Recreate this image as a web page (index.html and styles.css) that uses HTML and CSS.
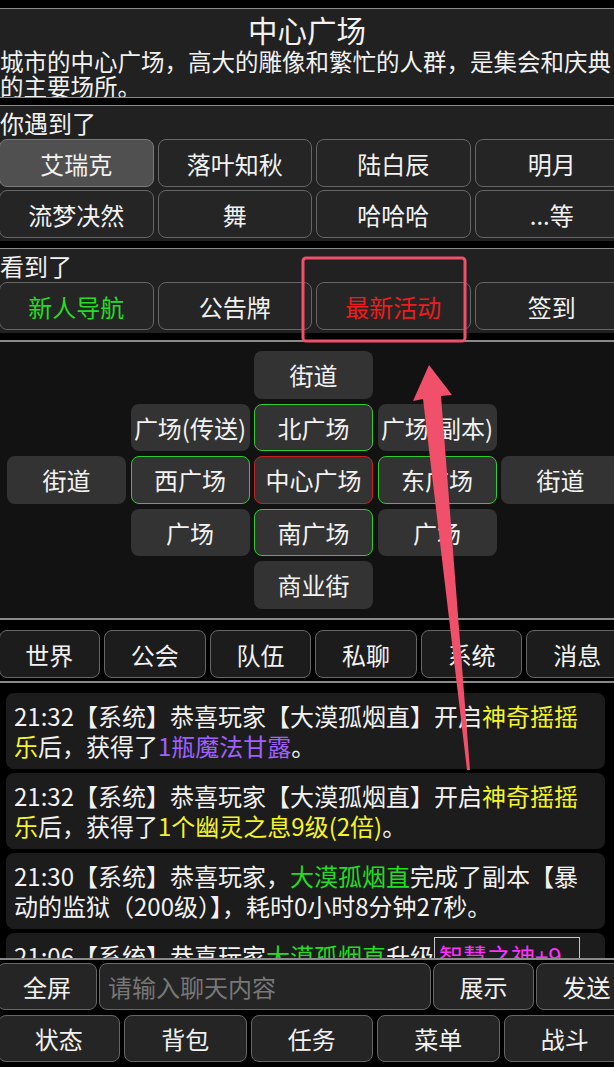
FILE: index.html
```html
<!DOCTYPE html>
<html lang="zh-CN">
<head>
    <meta charset="UTF-8">
    <title>中心广场</title>
    <link rel="stylesheet" href="styles.css">
</head>
<body>
<div class="panel info">
    <div class="title">中心广场</div>
    <div class="desc">城市的中心广场，高大的雕像和繁忙的人群，是集会和庆典的主要场所。</div>
</div>

<div class="panel group">
    <div class="label">你遇到了</div>
    <div class="btn-grid">
        <div class="btn on">艾瑞克</div>
        <div class="btn">落叶知秋</div>
        <div class="btn">陆白辰</div>
        <div class="btn">明月</div>
        <div class="btn">流梦决然</div>
        <div class="btn">舞</div>
        <div class="btn">哈哈哈</div>
        <div class="btn">...等</div>
    </div>
</div>

<div class="panel group">
    <div class="label">看到了</div>
    <div class="btn-grid">
        <div class="btn green">新人导航</div>
        <div class="btn">公告牌</div>
        <div class="btn red">最新活动</div>
        <div class="btn">签到</div>
    </div>
</div>

<div class="map">
    <div class="map-grid">
        <div class="gap"></div><div class="gap"></div>
        <div class="cell">街道</div>
        <div class="gap"></div><div class="gap"></div>

        <div class="gap"></div>
        <div class="cell">广场(传送)</div>
        <div class="cell near">北广场</div>
        <div class="cell">广场(副本)</div>
        <div class="gap"></div>

        <div class="cell">街道</div>
        <div class="cell near">西广场</div>
        <div class="cell here">中心广场</div>
        <div class="cell near">东广场</div>
        <div class="cell">街道</div>

        <div class="gap"></div>
        <div class="cell">广场</div>
        <div class="cell near">南广场</div>
        <div class="cell">广场</div>
        <div class="gap"></div>

        <div class="gap"></div><div class="gap"></div>
        <div class="cell">商业街</div>
        <div class="gap"></div><div class="gap"></div>
    </div>
</div>

<div class="tabs">
    <div class="tab">世界</div>
    <div class="tab">公会</div>
    <div class="tab">队伍</div>
    <div class="tab">私聊</div>
    <div class="tab">系统</div>
    <div class="tab">消息</div>
</div>

<div class="chat">
    <div class="msg">21:32【系统】恭喜玩家【大漠孤烟直】开启<span class="y">神奇摇摇乐</span>后，获得了<span class="p">1瓶魔法甘露</span>。</div>
    <div class="msg">21:32【系统】恭喜玩家【大漠孤烟直】开启<span class="y">神奇摇摇乐</span>后，获得了<span class="y">1个幽灵之息9级(2倍)</span>。</div>
    <div class="msg">21:30【系统】恭喜玩家，<span class="g">大漠孤烟直</span>完成了副本【暴动的监狱（200级）】，耗时0小时8分钟27秒。</div>
    <div class="msg">21:06【系统】恭喜玩家<span class="g">大漠孤烟直</span>升级<span class="item">智慧之神+9</span>成功，实力大增！</div>
</div>

<div class="bottom">
    <div class="input-row">
        <div class="btn full">全屏</div>
        <div class="say">请输入聊天内容</div>
        <div class="btn show">展示</div>
        <div class="btn show">发送</div>
    </div>
    <div class="nav-row">
        <div class="btn">状态</div>
        <div class="btn">背包</div>
        <div class="btn">任务</div>
        <div class="btn">菜单</div>
        <div class="btn">战斗</div>
    </div>
</div>

<svg class="mark" width="614" height="1067" viewBox="0 0 614 1067">
    <rect x="303" y="258" width="162" height="83" rx="3" fill="none" stroke="#f0506a" stroke-width="3"/>
    <polygon points="429,365 452,395 441,396 470,770 467,770 423,399 413,401" fill="#f0506a"/>
</svg>
</body>
</html>
```

FILE: styles.css
```css
html * {
    box-sizing: border-box;
}

body {
    margin: 0;
    height: 1067px;
    background: #000;
    color: #f2f2f2;
    font-family: "Noto Sans CJK SC", "Microsoft YaHei", sans-serif;
    font-size: 24px;
    display: flex;
    flex-direction: column;
    overflow: hidden;
    position: relative;
}

.panel {
    flex: none;
    background: #212121;
    border-top: 1px solid #8a8a8a;
    overflow: hidden;
}

.info {
    margin-top: 8px;
    height: 90px;
    border-bottom: 1px solid #8a8a8a;
}

.title {
    padding-top: 2px;
    font-size: 29.5px;
    line-height: 36px;
    text-align: center;
}

.desc {
    width: 630px;
    margin-top: 2px;
    font-size: 23.5px;
    line-height: 24.5px;
}

.group {
    margin-top: 7px;
    padding-bottom: 3px;
}

.label {
    line-height: 33px;
}

.btn-grid {
    display: grid;
    grid-template-columns: repeat(4, 154.5px);
    grid-auto-rows: 48px;
    gap: 3px 4px;
    margin-left: -1px;
}

.btn {
    display: flex;
    align-items: center;
    justify-content: center;
    background: #252525;
    border: 1px solid #666;
    border-radius: 8px;
    white-space: nowrap;
}

.btn.on {
    background: #505050;
    border-color: #7a7a7a;
}

.green {
    color: #22dd22;
}

.red {
    color: #ee1c1c;
}

.map {
    flex: none;
    margin-top: 7px;
    padding: 9px 0 9.5px 7px;
    background: #121212;
    border-top: 2px solid #8a8a8a;
    border-bottom: 2px solid #8a8a8a;
    overflow: hidden;
}

.map-grid {
    display: grid;
    grid-template-columns: repeat(5, 119px);
    grid-auto-rows: 47.5px;
    gap: 5px 4.5px;
}

.cell {
    display: flex;
    align-items: center;
    justify-content: center;
    background: #333;
    border: 1px solid transparent;
    border-radius: 8px;
    white-space: nowrap;
}

.cell.near {
    border-color: #2ecc2e;
}

.cell.here {
    border-color: #c42222;
}

.tabs {
    flex: none;
    display: flex;
    gap: 4.1px;
    padding: 10px 0 3px;
    margin-left: -1.5px;
    border-bottom: 2px solid #8a8a8a;
}

.tab {
    flex: none;
    width: 101.5px;
    height: 48px;
    display: flex;
    align-items: center;
    justify-content: center;
    background: #1c1c1c;
    border: 1px solid #666;
    border-radius: 8px;
}

.chat {
    flex: 1;
    min-height: 0;
    overflow: hidden;
    padding: 10px 9px 0 6px;
    display: flex;
    flex-direction: column;
    gap: 4px;
}

.msg {
    flex: none;
    background: #1c1c1c;
    border-radius: 8px;
    padding: 8px;
    line-height: 30px;
}

.y {
    color: #f5f523;
}

.p {
    color: #a060ff;
}

.g {
    color: #22dd22;
}

.item {
    color: #ff30ff;
    border: 1px solid #c8c8c8;
    padding: 0 17px 0 4px;
}

.bottom {
    flex: none;
    border-top: 2px solid #8a8a8a;
    padding: 3px 0 5px;
    display: flex;
    flex-direction: column;
    gap: 5px;
    overflow: hidden;
}

.input-row {
    display: flex;
    gap: 2px;
    height: 47px;
    margin-left: -3px;
}

.full {
    flex: none;
    width: 100px;
}

.say {
    flex: none;
    width: 332px;
    display: flex;
    align-items: center;
    padding-left: 8px;
    color: #777;
    background: #252525;
    border: 1px solid #666;
    border-radius: 8px;
}

.show {
    flex: none;
    width: 101px;
}

.nav-row {
    display: grid;
    grid-template-columns: repeat(5, 122.5px);
    grid-auto-rows: 47px;
    gap: 4px;
    margin-left: -2.5px;
}

.mark {
    position: absolute;
    top: 0;
    left: 0;
    pointer-events: none;
}
```
